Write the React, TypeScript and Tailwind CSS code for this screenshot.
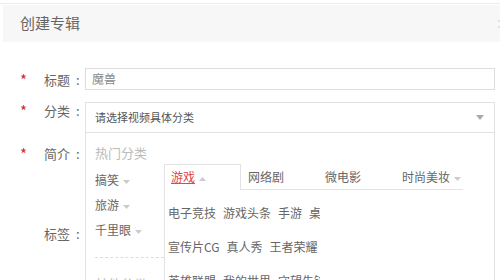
import { X } from 'lucide-react';

// ─── Bits ─────────────────────────────────────────────────────────────────────

function Caret({ up = false }: { up?: boolean }) {
  return (
    <svg width="7" height="4" viewBox="0 0 7 4" className="inline-block ml-[4px] align-middle">
      <path d={up ? 'M0 4L3.5 0L7 4Z' : 'M0 0L3.5 4L7 0Z'} fill="#cccccc" />
    </svg>
  );
}

function Star({ show = true }: { show?: boolean }) {
  return (
    <span className="w-[44px] pl-[20px] text-[15px] leading-[17px] text-[#c9302c] shrink-0">
      {show ? '*' : ''}
    </span>
  );
}

function Label({ text }: { text: string }) {
  return (
    <span className="w-[41px] shrink-0 text-[13px] leading-[17px] text-[#666] whitespace-nowrap">
      {text}
      <span className="ml-[6px]">:</span>
    </span>
  );
}

const TABS = [
  { label: '游戏', active: true, caret: 'up', w: 'w-[77px]' },
  { label: '网络剧', w: 'w-[77px]' },
  { label: '微电影', w: 'w-[77px]' },
  { label: '时尚美妆', caret: 'down', w: 'w-[68px]' },
];

const SUB_ROWS = [
  ['电子竞技', '游戏头条', '手游', '桌游'],
  ['宣传片CG', '真人秀', '王者荣耀'],
  ['英雄联盟', '我的世界', '守望先锋'],
];

// ─── Category dropdown ────────────────────────────────────────────────────────

function CategoryPanel() {
  return (
    <div className="absolute left-[85px] top-full w-[410px] h-[160px] bg-white border-l border-r border-[#e3e3e3]">
      <div className="pl-[9px] pt-[11px] text-[13px] leading-[17px] text-[#bbb]">热门分类</div>
      <div className="flex mt-[3px]">
        {/* left column */}
        <div className="w-[78px] shrink-0 pt-[3px]">
          {['搞笑', '旅游', '千里眼'].map((t) => (
            <div key={t} className="pl-[9px] h-[25px] leading-[25px] text-[12px] text-[#666] whitespace-nowrap">
              {t}
              <Caret />
            </div>
          ))}
          <div className="ml-[9px] mt-[15px] border-t border-dashed border-[#ddd]" />
          <div className="pl-[9px] mt-[17px] text-[13px] leading-[17px] text-[#bbb]">其他分类</div>
        </div>

        {/* right column */}
        <div className="flex-1">
          <div className="flex h-[26px]">
            {TABS.map((t) => (
              <div
                key={t.label}
                className={
                  t.active
                    ? `${t.w} h-[26px] border-t border-l border-r border-[#e3e3e3] bg-white pl-[6px] leading-[24px] text-[12px]`
                    : `${t.w} h-[26px] border-b border-[#e3e3e3] pl-[7px] leading-[26px] text-[12px] text-[#666]`
                }
              >
                <span className={t.active ? 'text-[#e0464a] underline decoration-[#e0464a]' : ''}>{t.label}</span>
                {t.caret && <Caret up={t.caret === 'up'} />}
              </div>
            ))}
          </div>
          <div className="w-[156px] h-[120px] overflow-hidden border-l border-[#e3e3e3] pt-[6px] pl-[3px]">
            {SUB_ROWS.map((row, i) => (
              <div key={i} className="flex h-[34px] items-center whitespace-nowrap text-[12px] text-[#666]">
                {row.map((s) => (
                  <span key={s} className="mr-[7px] shrink-0">{s}</span>
                ))}
              </div>
            ))}
          </div>
        </div>
      </div>
    </div>
  );
}

// ─── Page ─────────────────────────────────────────────────────────────────────

export default function App() {
  return (
    <div
      className="w-[500px] h-[280px] overflow-hidden bg-white relative"
      style={{ fontFamily: '"Noto Sans CJK SC", "Noto Sans", sans-serif' }}
    >
      {/* Header */}
      <div className="mt-[3px] border-t border-[#ececec]" />
      <div className="mt-[1px] ml-[3px] h-[37px] bg-[#f7f7f7] flex items-center pl-[17px] relative">
        <span className="text-[15px] text-[#666]">创建专辑</span>
        <X className="absolute left-[491px] top-[11px] h-[16px] w-[16px] text-[#ccc]" strokeWidth={1.5} />
      </div>

      {/* Form */}
      <div className="flex items-center mt-[26px] h-[22px]">
        <Star />
        <Label text="标题" />
        <div className="w-[410px] h-[22px] border border-[#ddd] pl-[6px] text-[12px] leading-[20px] text-[#888]">
          魔兽
        </div>
      </div>

      <div className="relative flex mt-[12px] h-[31px]">
        <Star />
        <Label text="分类" />
        <div className="w-[410px] h-[31px] border border-[#e3e3e3] pl-[9px] pr-[10px] flex items-center justify-between text-[11px] text-[#555]">
          <span>请选择视频具体分类</span>
          <svg width="8" height="5" viewBox="0 0 8 5">
            <path d="M0 0L4 5L8 0Z" fill="#aaa" />
          </svg>
        </div>
        <CategoryPanel />
      </div>

      <div className="flex mt-[12px] h-[80px]">
        <Star />
        <Label text="简介" />
      </div>

      <div className="flex">
        <Star show={false} />
        <Label text="标签" />
      </div>
    </div>
  );
}
